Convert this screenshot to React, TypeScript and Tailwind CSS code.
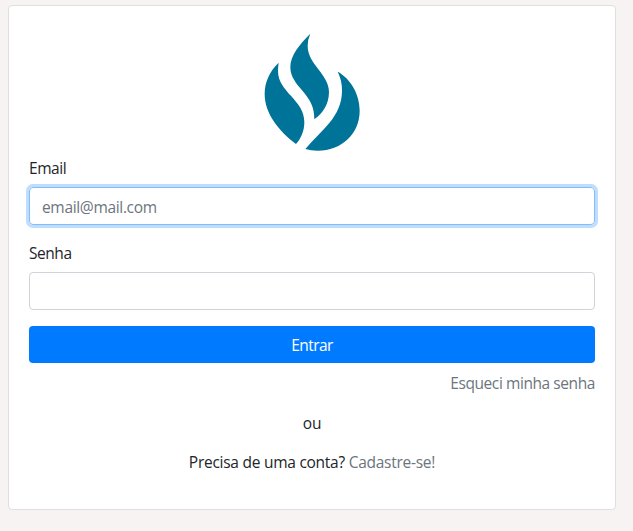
function FlameLogo() {
  return (
    <svg className="block h-[135px] w-[120px]" viewBox="0 0 360 405" fill="#007398" aria-hidden="true">
      <path d="M80 113C53 139 38 171 38 207C38 265 80 318 132 357C146 341 157 320 157 291C157 224 78 202 78 138Q78 125 80 113Z" />
      <path d="M175 26C143 58 115 91 115 126C115 187 190 205 187 283C211 266 231 239 231 201C231 148 167 118 167 63Q167 43 175 26Z" />
      <path d="M257 140C295 160 323 207 323 257C323 328 266 378 196 377Q177 377 160 372C207 316 270 276 270 197Q270 165 257 140Z" />
    </svg>
  );
}

export default function App() {
  return (
    <main className="h-[531px] w-full bg-[#f7f3f2] pt-[5px] pl-2 font-['Open_Sans','Noto_Sans',sans-serif] text-[15.5px] leading-6 text-[#212529]">
      <section className="flex h-[505px] w-[608px] flex-col rounded-[4px] border border-[#dfdfdf] bg-white px-5 pt-[19px]">
        <div className="-mb-[4px] flex justify-center pr-px">
          <FlameLogo />
        </div>
        <form className="flex flex-col">
          <label htmlFor="email" className="mb-[7px]"><span className="tracking-[-0.45px]">Email</span></label>
          <input
            id="email"
            type="email"
            placeholder="email@mail.com"
            className="h-[38px] rounded-[4px] border border-[#80bdff] px-3 pt-[2px] tracking-[-0.33px] shadow-[0_0_0_3px_#bfdeff] outline-none placeholder:text-[#6c757d]"
          />
          <label htmlFor="senha" className="mt-4 mb-[7px]"><span className="tracking-[-0.45px]">Senha</span></label>
          <input id="senha" type="password" className="h-[38px] rounded-[4px] border border-[#ced4da] px-3 outline-none" />
          <button type="button" className="mt-4 h-[37px] rounded-[4px] bg-[#007bff] tracking-[-0.55px] text-white">
            Entrar
          </button>
        </form>
        <a className="mt-2 self-end tracking-[-0.42px] text-[#6c757d]">Esqueci minha senha</a>
        <p className="mt-4 text-center tracking-[-0.2px]">ou</p>
        <p className="mt-[15px] text-center tracking-[-0.26px]">
          Precisa de uma conta? <a className="text-[#6c757d]">Cadastre-se!</a>
        </p>
      </section>
    </main>
  );
}
